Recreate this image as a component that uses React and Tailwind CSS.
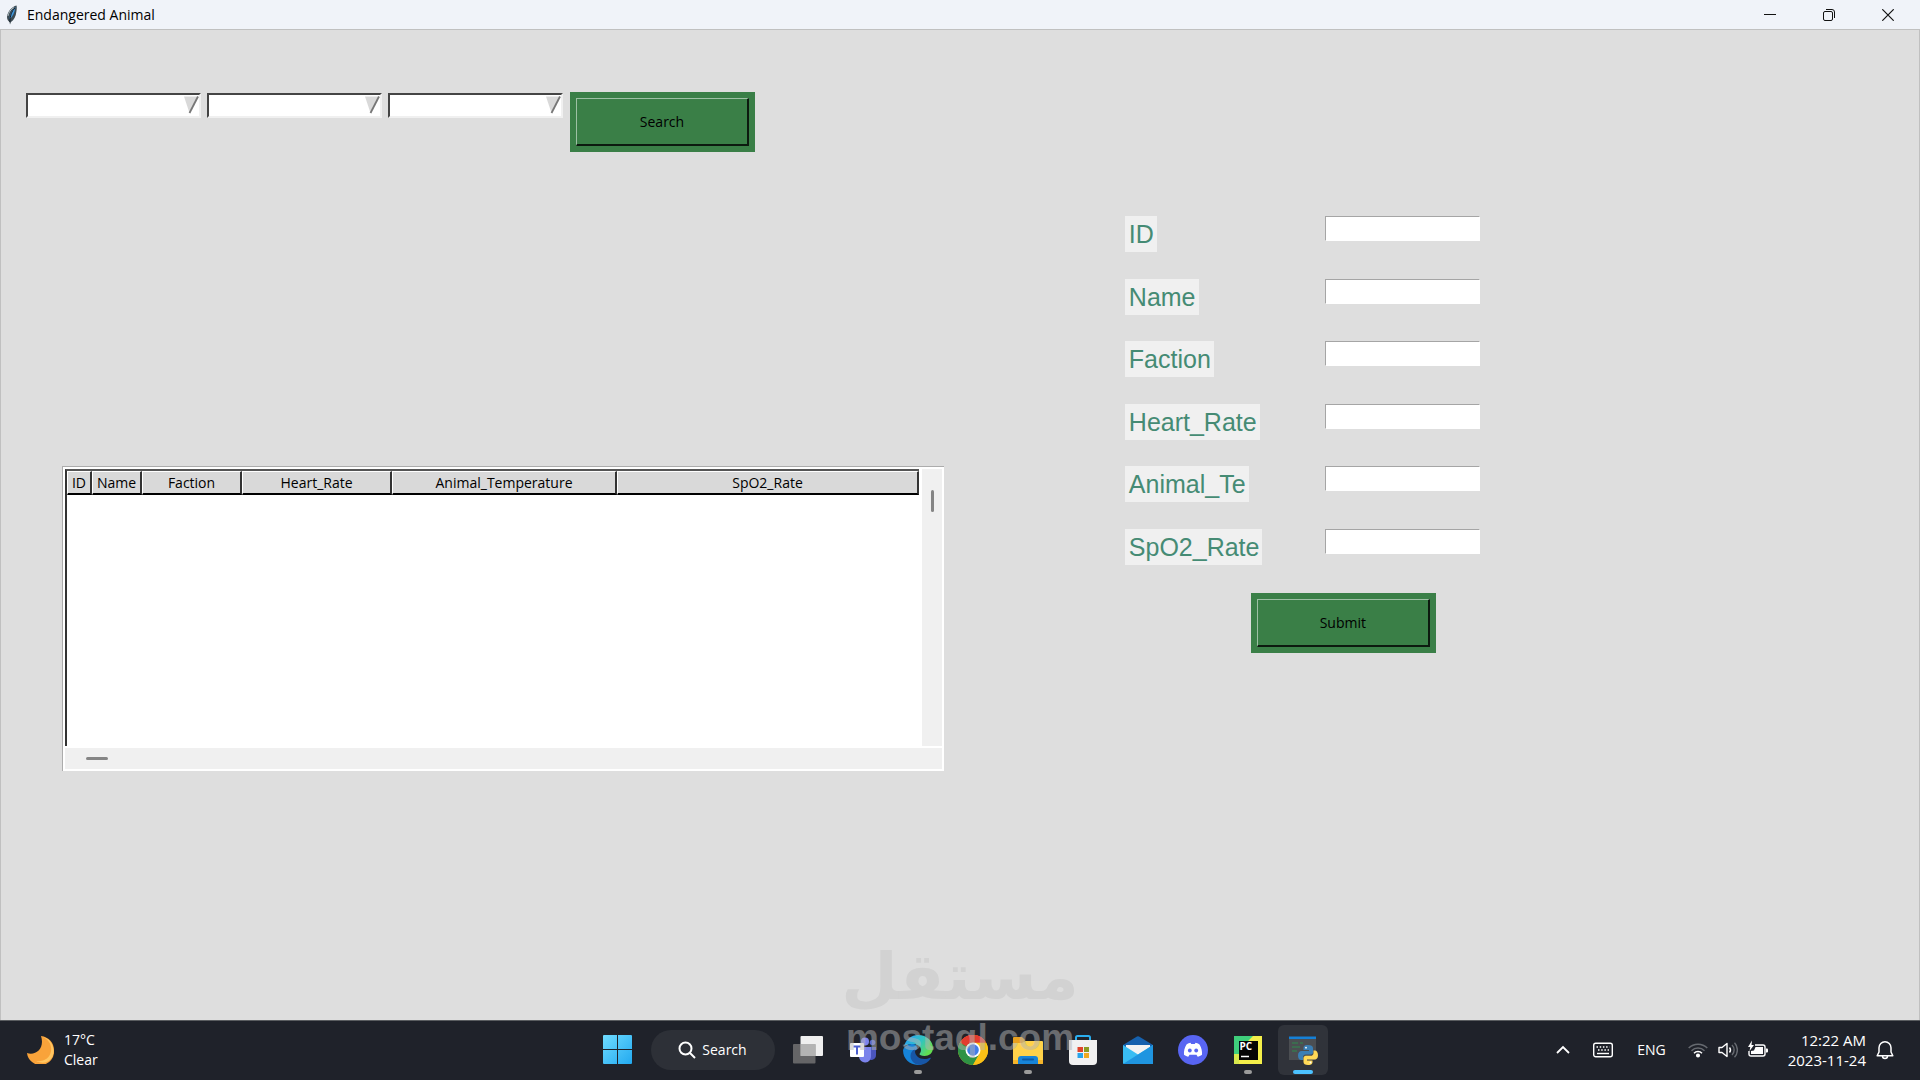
const filters = ['Animal ID', 'Animal name', 'Animal faction']

const columns = [
    { name: 'ID', width: 'w-[25px]' },
    { name: 'Name', width: 'w-[50px]' },
    { name: 'Faction', width: 'w-[100px]' },
    { name: 'Heart_Rate', width: 'w-[150px]' },
    { name: 'Animal_Temperature', width: 'w-[225px]' },
    { name: 'SpO2_Rate', width: 'w-auto' },
]

const fields = ['ID', 'Name', 'Faction', 'Heart_Rate', 'Animal_Te', 'SpO2_Rate']

function TitleBar() {
    return (
        <header className="flex h-[29px] items-center bg-[#f0f3f9] pl-[6px] pr-[3px]">
            <svg className="h-5 w-[12px]" viewBox="0 0 12 20">
                <path d="M10.5 .5C6 1.5 1.5 6.500 1 12c0 2 1 4 2.500 5L4 19.500 5 17c3-2 5-6 5.300-10C10.800 4.500 11 2 10.500.5Z" fill="#3d4a52" />
                <path d="M9.500 2C7 4 4 8 3.500 14c3-2 5-6 6-12Z" fill="#3f97dd" />
                <path d="M9 3C5.500 6 4 11 3.800 17" stroke="#15202b" strokeWidth="1" fill="none" />
                <path d="M8 2.500C5 4 2.500 7.500 2 11" stroke="#a9b7bd" strokeWidth="1" fill="none" />
            </svg>
            <h1 className="ml-[9px] flex-1 text-sm">Endangered Animal</h1>
            <button aria-label="Minimize" className="flex h-full w-[58px] items-center justify-center">
                <svg className="h-3 w-3" viewBox="0 0 12 12" stroke="#111" fill="none">
                    <path d="M0 5.500h12" />
                </svg>
            </button>
            <button aria-label="Restore" className="flex h-full w-[59px] items-center justify-center">
                <svg className="h-3 w-3" viewBox="0 0 12 12" stroke="#111" fill="none">
                    <rect x=".5" y="2.500" width="9" height="9" rx="1.500" />
                    <path d="M3 .5h6a2.500 2.500 0 0 1 2.500 2.500v6" />
                </svg>
            </button>
            <button aria-label="Close" className="flex h-full w-[59px] items-center justify-center">
                <svg className="h-3 w-3" viewBox="0 0 12 12" stroke="#111" strokeWidth="1.200" fill="none">
                    <path d="M.3.3l11.400 11.400M11.700.3L.3 11.700" />
                </svg>
            </button>
        </header>
    )
}

function FilterSelect({ label }) {
    return (
        <div className="relative h-[25px] w-[175px]">
            <select
                aria-label={label}
                className="h-full w-full appearance-none border-2 border-t-[#444] border-r-[#f0f0f0] border-b-[#f0f0f0] border-l-[#444] bg-white px-1 text-sm outline-none"
            />
            <svg className="pointer-events-none absolute top-[4px] right-[2px] h-[18px] w-[15px]" viewBox="0 0 15 18">
                <path d="M0 .5h14.500L5.500 17Z" fill="#d9d9d9" />
                <path d="M14 .5L5.500 17" stroke="#777" strokeWidth="1.800" />
            </svg>
        </div>
    )
}

function GreenButton({ children, type = 'button' }) {
    return (
        <button type={type} className="h-[60px] w-[185px] bg-[#3a7f47] p-[6px] text-sm text-black">
            <span className="flex h-full w-full items-center justify-center border-t border-r-2 border-b-2 border-l border-t-[#9dc0a4] border-r-[#0c1a0f] border-b-[#0c1a0f] border-l-[#9dc0a4]">
                {children}
            </span>
        </button>
    )
}

function AnimalTable() {
    return (
        <div className="grid w-full max-w-[882px] grid-cols-[1fr_20px] grid-rows-[277px_21px] gap-x-[3px] gap-y-[2px] border-t border-l border-[#acacac] bg-white p-[2px]">
            <div className="border-t-2 border-l-2 border-t-[#555] border-l-[#333] bg-white">
                <table className="w-full table-fixed border-separate border-spacing-0">
                    <thead>
                        <tr>
                            {columns.map(col => (
                                <th
                                    key={col.name}
                                    className={`${col.width} h-6 border-t border-r-2 border-b-2 border-l border-t-white border-r-[#333] border-b-black border-l-white bg-[#d9d9d9] p-0 text-sm font-normal whitespace-nowrap`}
                                >
                                    {col.name}
                                </th>
                            ))}
                        </tr>
                    </thead>
                    <tbody />
                </table>
            </div>
            <div className="flex justify-center bg-[#f0f0f0] pt-[21px]">
                <div className="h-[22px] w-[3px] rounded-full bg-[#858585]" />
            </div>
            <div className="col-span-2 flex items-center bg-[#f0f0f0] pl-[21px]">
                <div className="h-[3px] w-[22px] rounded-full bg-[#858585]" />
            </div>
        </div>
    )
}

function AnimalForm() {
    return (
        <form onSubmit={e => e.preventDefault()}>
            <div className="flex h-[349px] flex-col justify-between">
                {fields.map(field => (
                    <div key={field} className="grid grid-cols-[200px_155px] items-start">
                        <label
                            htmlFor={field}
                            className="h-[36px] justify-self-start bg-[#f0f0f0] pr-[3px] pl-1 font-['Liberation_Sans',sans-serif] text-[25px] leading-[36px] text-[#458b74]"
                        >
                            {field}
                        </label>
                        <input
                            id={field}
                            type="text"
                            className="h-[25px] w-full border border-t-[#a5a5a5] border-r-white border-b-white border-l-[#a5a5a5] bg-white px-1 text-sm outline-none"
                        />
                    </div>
                ))}
            </div>
            <div className="mt-7 ml-[126px]">
                <GreenButton type="submit">Submit</GreenButton>
            </div>
        </form>
    )
}

function StartIcon() {
    return (
        <svg className="h-[29px] w-[29px]" viewBox="0 0 29 29">
            <defs>
                <linearGradient id="start" x1="0" y1="0" x2="1" y2="1" gradientUnits="objectBoundingBox">
                    <stop offset="0" stopColor="#6fdcff" />
                    <stop offset="1" stopColor="#22a9f0" />
                </linearGradient>
            </defs>
            <path d="M0 1q0-1 1-1h13v14H0ZM15 0h13q1 0 1 1v13H15ZM0 15h14v14H1q-1 0-1-1ZM15 15h14v13q0 1-1 1H15Z" fill="url(#start)" />
        </svg>
    )
}

function TaskViewIcon() {
    return (
        <svg className="h-[30px] w-[30px]" viewBox="0 0 30 30">
            <rect x="7.500" y="1" width="22.500" height="20" rx="1" fill="#efefef" />
            <rect x="0" y="9" width="22.500" height="19.500" rx="1" fill="#777" fillOpacity=".8" />
            <rect x="7.500" y="9" width="15" height="12" fill="#b3b3b3" />
        </svg>
    )
}

function TeamsIcon() {
    return (
        <svg className="h-[26px] w-[26px]" viewBox="0 0 26 26">
            <circle cx="22.500" cy="5.500" r="2.800" fill="#5b66d0" />
            <path d="M17 10h9v8a5 5 0 0 1-9 3Z" fill="#4a55bd" />
            <circle cx="15" cy="4.500" r="4" fill="#7b83eb" />
            <path d="M9 10h12v9a6 6 0 0 1-12 1Z" fill="#7b83eb" />
            <rect x="0" y="6" width="14" height="14" rx="1" fill="#fff" />
            <path d="M3.500 9.500h7M7 9.500v8" stroke="#4b5fd0" strokeWidth="2" />
        </svg>
    )
}

function EdgeIcon() {
    return (
        <svg className="h-[30px] w-[30px]" viewBox="0 0 30 30">
            <defs>
                <linearGradient id="edgeTop" x1="0" y1="0" x2="1" y2=".5">
                    <stop offset=".2" stopColor="#2aa8ea" />
                    <stop offset=".6" stopColor="#31c5c0" />
                    <stop offset="1" stopColor="#62dd50" />
                </linearGradient>
            </defs>
            <path d="M1 11C3 4.500 8.500 0 15 0c9 0 15 6.500 15 13 0 5-4 8-8.500 8-3.500 0-5-1.200-5-2 0-.8 1.500-1.500 1.500-4 0-3.500-3.500-6-8-6-4 0-7 1-9 2Z" fill="url(#edgeTop)" />
            <path d="M10 9c-5 0-9 2.500-9.900 6-.5 8 6 15 14.900 15 1.500 0 3-.3 4-.7-5-1-8.500-5-8.500-9.300 0-3 1.500-5 4-6C14 11 12.500 9 10 9Z" fill="#1683d8" />
            <path d="M12 14c-3 1.500-4.500 4-4.500 7 0 4.500 4 9 9.500 9 4.500-.5 8.500-3 10.700-6.500.3-.6-.2-1-.8-.7-1.500.8-3.300 1.200-5.400 1.200-5.500 0-9.500-3.500-9.500-8Z" fill="#1756a6" />
        </svg>
    )
}

function ChromeIcon() {
    return (
        <svg className="h-[30px] w-[30px]" viewBox="0 0 30 30">
            <circle cx="15" cy="15" r="15" fill="#fbc116" />
            <path d="M15 15L2 7.500A15 15 0 0 1 28 7.500Z" fill="#e33b2e" />
            <path d="M15 15L2 7.500A15 15 0 0 0 15 30l6.500-11.300Z" fill="#2e9344" />
            <path d="M15 7.500h13A15 15 0 0 1 15 30l6.500-11.300Z" fill="#fbc116" />
            <path d="M2 7.500h13v4L8.500 18.700Z" fill="#2e9344" />
            <path d="M2 7.500A15 15 0 0 1 28 7.500H15a7.500 7.500 0 0 0-6.500 4Z" fill="#e33b2e" />
            <circle cx="15" cy="15" r="7.500" fill="#fff" />
            <circle cx="15" cy="15" r="5.800" fill="#3f7de8" />
        </svg>
    )
}

function ExplorerIcon() {
    return (
        <svg className="h-[30px] w-[30px]" viewBox="0 0 30 30">
            <path d="M0 3q0-1 1-1h8l3 3-2 4H0Z" fill="#e8a01e" />
            <path d="M0 8h9l3-2h17q1 0 1 1v21q0 1-1 1H1q-1 0-1-1Z" fill="#ffd24a" />
            <path d="M0 25h30v3q0 1-1 1H1q-1 0-1-1Z" fill="#f5b52b" />
            <path d="M5 29v-5q0-3 3-3h14q3 0 3 3v5Z" fill="#1784d8" />
            <rect x="9" y="23.500" width="12" height="2" rx="1" fill="#0d5aa5" />
        </svg>
    )
}

function StoreIcon() {
    return (
        <svg className="h-[30px] w-[30px]" viewBox="0 0 30 30">
            <path d="M8 6V2.500Q8 1 9.500 1h11Q22 1 22 2.500V6" stroke="#2aaeef" strokeWidth="2" fill="none" />
            <path d="M1 5h28v21q0 4-4 4H5q-4 0-4-4Z" fill="#f1f1f1" />
            <path d="M9.500 12H15v5H9.500Z" fill="#e0452c" />
            <path d="M16 12h5v5h-5Z" fill="#8b9b22" />
            <path d="M9.500 18H15v5H9.500Z" fill="#2aa5ea" />
            <path d="M16 18h5v5h-5Z" fill="#efa921" />
        </svg>
    )
}

function MailIcon() {
    return (
        <svg className="h-[30px] w-[30px]" viewBox="0 0 30 30">
            <path d="M0 10L14 1.500q1-.7 2 0L30 10v8H0Z" fill="#1661ae" />
            <path d="M3 10h24v6L15 22 3 16Z" fill="#f3f3f3" />
            <path d="M0 10l15 9.500L30 10v18q0 1-1 1H1q-1 0-1-1Z" fill="#39bdf3" />
            <path d="M0 29L15 19.500 30 10v18q0 1-1 1Z" fill="#1f95e0" />
        </svg>
    )
}

function DiscordIcon() {
    return (
        <svg className="h-[30px] w-[30px]" viewBox="0 0 30 30">
            <circle cx="15" cy="15" r="15" fill="#5865f2" />
            <path d="M8.500 9.500c1.500-1 3-1.500 4-1.700l.7 1.200h3.600l.7-1.200c1 .2 2.500.7 4 1.700 2 3.200 2.800 6.700 2.500 10.300-1.500 1.100-3 1.700-4.300 2l-1.200-2h-7l-1.200 2c-1.300-.3-2.800-.9-4.300-2-.3-3.600.5-7.100 2.500-10.300Z" fill="#fff" />
            <ellipse cx="11.800" cy="15.500" rx="1.900" ry="2.100" fill="#5865f2" />
            <ellipse cx="18.200" cy="15.500" rx="1.900" ry="2.100" fill="#5865f2" />
        </svg>
    )
}

function PyCharmIcon() {
    return (
        <svg className="h-[28px] w-[28px]" viewBox="0 0 28 28">
            <path d="M0 0h28v28H0Z" fill="#f4ef4a" />
            <path d="M0 0h19L10 9 3 28H0Z" fill="#3fcf7c" />
            <path d="M0 18l5 0v10H0Z" fill="#d9e94d" />
            <path d="M5 5h19v19H5Z" fill="#050505" />
            <text x="5.500" y="14" fontSize="10" fontWeight="700" fill="#fff" className="font-['Open_Sans',sans-serif]">PC</text>
            <path d="M7 20.500h8" stroke="#fff" strokeWidth="1.500" />
        </svg>
    )
}

function PythonIcon() {
    return (
        <svg className="h-[30px] w-[30px]" viewBox="0 0 30 30">
            <path d="M1 2h27v23H1Z" fill="#4b4e52" />
            <path d="M1 1.500h27v2.500H1Z" fill="#1580d6" />
            <path d="M4 8h6M12 8h3M4 12h8M4 16h5" stroke="#2e8a4d" strokeWidth="1.200" />
            <path d="M20 10c-4 0-4.500 1.500-4.500 3v2H21v1h-7.500c-2 0-3.500 1.500-3.500 4.500S11.500 25 13 25h2v-3c0-1.500 1.200-2.500 2.700-2.500h5c1.300 0 2.300-1 2.300-2.300V13c0-2-2-3-5-3Z" fill="#3a7fb5" />
            <path d="M20 30c4 0 4.500-1.500 4.500-3v-1.500H19v-1h7.500c2 0 3.500-1.300 3.500-4.300S28.500 15.500 27 15.500h-1.500v2.700c0 1.500-1.200 2.600-2.700 2.600h-5c-1.300 0-2.300 1-2.300 2.300V27c0 2 1.500 3 4.500 3Z" fill="#ffd957" />
            <circle cx="18" cy="12.700" r=".9" fill="#fff" />
            <circle cx="22.500" cy="27.500" r=".9" fill="#fff" />
        </svg>
    )
}

const apps = [
    { name: 'Task view', icon: TaskViewIcon },
    { name: 'Teams', icon: TeamsIcon },
    { name: 'Edge', icon: EdgeIcon, running: true },
    { name: 'Chrome', icon: ChromeIcon },
    { name: 'File Explorer', icon: ExplorerIcon, running: true },
    { name: 'Store', icon: StoreIcon },
    { name: 'Mail', icon: MailIcon },
    { name: 'Discord', icon: DiscordIcon },
    { name: 'PyCharm', icon: PyCharmIcon, running: true },
    { name: 'Python', icon: PythonIcon, active: true },
]

function AppButton({ app }) {
    const Icon = app.icon
    return (
        <button
            aria-label={app.name}
            className={`relative flex h-[50px] w-[50px] items-center justify-center rounded-md ${app.active ? 'bg-[#30333a]' : ''}`}
        >
            <Icon />
            {app.running && <span className="absolute bottom-[1px] left-[21px] h-[4px] w-[8px] rounded-full bg-[#9b9b9b]" />}
            {app.active && <span className="absolute bottom-[1px] left-[15px] h-[4px] w-[20px] rounded-full bg-[#4cc2ff]" />}
        </button>
    )
}

function Tray() {
    return (
        <div className="flex items-center justify-end pr-[26px]">
            <button aria-label="Show hidden icons">
                <svg className="h-5 w-[14px]" viewBox="0 0 14 20" fill="none" stroke="#fff" strokeWidth="1.800">
                    <path d="M1 13l6-6 6 6" />
                </svg>
            </button>
            <button aria-label="Touch keyboard" className="ml-[23px]">
                <svg className="h-5 w-5" viewBox="0 0 20 20" fill="none" stroke="#fff" strokeWidth="1.400">
                    <rect x=".7" y="3.200" width="18.600" height="13.600" rx="2" />
                    <path d="M4 13.500h12" />
                    <path d="M3.500 7h13M5 10h11" strokeDasharray="1.500 1.700" />
                </svg>
            </button>
            <button className="ml-6 text-sm">ENG</button>
            <button aria-label="Network, volume and battery" className="ml-[22px] flex gap-[10px]">
                <svg className="h-5 w-5" viewBox="0 0 20 20" fill="none" stroke="#fff" strokeWidth="1.500">
                    <path d="M.7 8a13.200 13.200 0 0 1 18.600 0M3.500 10.800a9.200 9.200 0 0 1 13 0" stroke="#666a70" />
                    <path d="M6 13.200a5.700 5.700 0 0 1 8 0" />
                    <circle cx="10" cy="15.500" r="1.300" fill="#fff" />
                </svg>
                <svg className="h-5 w-5" viewBox="0 0 20 20" fill="none" stroke="#fff" strokeWidth="1.400">
                    <path d="M1 7.500h3L9 3.500v13l-5-4H1Z" strokeLinejoin="round" />
                    <path d="M11.500 7.500a4 4 0 0 1 0 5" />
                    <path d="M14 5a7 7 0 0 1 0 10M16.500 2.800a10.500 10.500 0 0 1 0 14.400" stroke="#666a70" />
                </svg>
                <svg className="h-5 w-5" viewBox="0 0 20 20">
                    <path d="M7 5h8q2 0 2 2v7q0 2-2 2H3q-2 0-2-2v-3" fill="none" stroke="#fff" strokeWidth="1.400" />
                    <path d="M7.500 7H15v7H3v-3l3-.5Z" fill="#fff" />
                    <path d="M18 8.500h1q1 0 1 1v2q0 1-1 1h-1Z" fill="#fff" />
                    <path d="M4 .5L0 7h2.300L1.500 11 6 5H3.500Z" fill="#fff" />
                </svg>
            </button>
            <button className="ml-5 text-right text-[15px] leading-5">
                12:22 AM
                <br />
                2023-11-24
            </button>
            <button aria-label="Notifications" className="ml-[10px]">
                <svg className="h-5 w-[18px]" viewBox="0 0 18 20" fill="none" stroke="#fff" strokeWidth="1.500" strokeLinejoin="round">
                    <path d="M9 1.800a6 6 0 0 0-6 6v4.200L1.200 15.800h15.600L15 12V7.800a6 6 0 0 0-6-6Z" />
                    <path d="M6.500 16a2.500 2.500 0 0 0 5 0" />
                </svg>
            </button>
        </div>
    )
}

function Taskbar() {
    return (
        <footer className="grid h-[60px] grid-cols-[1fr_auto_1fr] items-center border-t border-[#5a5d60] bg-[#1f222a] pb-[2px] text-white">
            <button className="flex items-center gap-[10px] justify-self-start pl-[27px] text-left">
                <svg className="h-[28px] w-[27px]" viewBox="0 0 27 28">
                    <path d="M14 0c8 1 13 7 13 14A13.500 13.500 0 0 1 0 17c9 3 18-5 14-17Z" fill="#f9a33a" />
                    <path d="M16 1c6 3 9 8 8 14-1 7-7 11-15 10 12 6 20-5 17-14-1.500-5-5-9-10-10Z" fill="#ffc661" />
                </svg>
                <span className="text-sm leading-5">
                    17°C
                    <br />
                    Clear
                </span>
            </button>
            <nav className="flex items-center gap-[5px]">
                <button aria-label="Start" className="flex h-[50px] w-[50px] items-center justify-center">
                    <StartIcon />
                </button>
                <button className="mx-[3px] flex h-10 w-[124px] items-center justify-center gap-[6px] rounded-full bg-[#2d3037] text-sm">
                    <svg className="h-[18px] w-[18px]" viewBox="0 0 18 18" fill="none" stroke="#fff" strokeWidth="2">
                        <circle cx="7.500" cy="7.500" r="6" />
                        <path d="M12 12l5 5" />
                    </svg>
                    Search
                </button>
                {apps.map(app => (
                    <AppButton key={app.name} app={app} />
                ))}
            </nav>
            <Tray />
        </footer>
    )
}

function Watermark() {
    return (
        <div className="pointer-events-none absolute bottom-[20px] left-1/2 flex -translate-x-1/2 flex-col items-center font-bold">
            <span lang="ar" dir="rtl" className="font-['DejaVu_Sans',sans-serif] text-[65px] leading-[78px] text-[#d2d2d2]">
                مستقل
            </span>
            <span className="font-['Liberation_Sans',sans-serif] text-[37px] leading-[44px] text-[#b4b4b4]/50">mostaql.com</span>
        </div>
    )
}

export default function App() {
    return (
        <div className="relative flex min-h-screen flex-col overflow-hidden bg-[#dedede] font-['Open_Sans',sans-serif] text-black">
            <TitleBar />
            <main className="grid flex-1 grid-cols-[75fr_53fr] border border-b-0 border-[#c0c0c0]">
                <section className="pt-[62px] pl-[25px]">
                    <div className="flex items-start gap-[7px]">
                        <div className="flex gap-[6px]">
                            {filters.map(label => (
                                <FilterSelect key={label} label={label} />
                            ))}
                        </div>
                        <GreenButton>Search</GreenButton>
                    </div>
                    <div className="mt-[314px] pl-9">
                        <AnimalTable />
                    </div>
                </section>
                <section className="pt-[186px]">
                    <AnimalForm />
                </section>
            </main>
            <Taskbar />
            <Watermark />
        </div>
    )
}
